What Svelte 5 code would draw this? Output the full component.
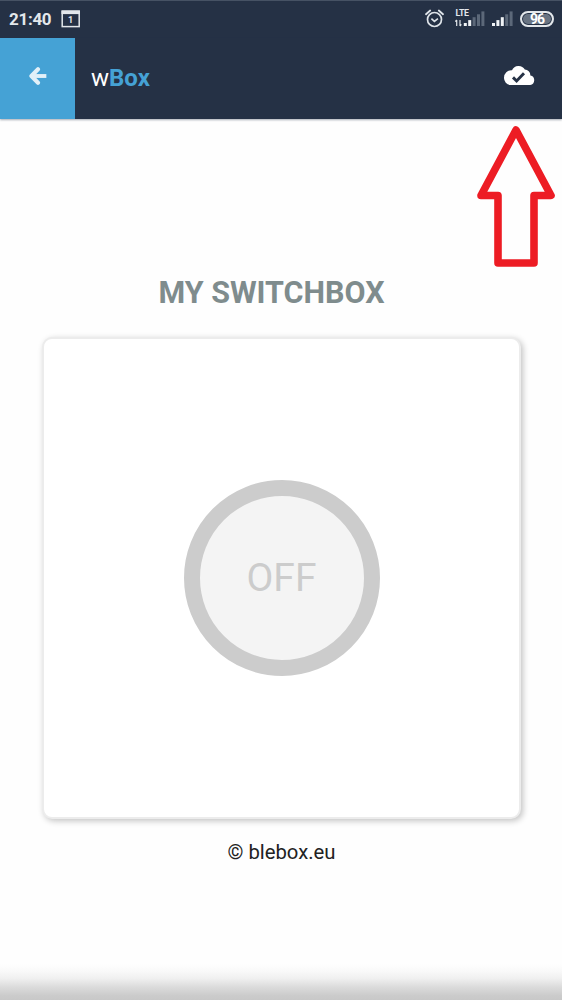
<script lang="ts">
	type Props = {
		name?: string;
		time?: string;
		battery?: number;
	};
	let { name = "My switchBox", time = "21:40", battery = 96 }: Props = $props();

	let on = $state(false);

	const bars = [0, 1, 2, 3, 4];
</script>

{#snippet signal(active: number)}
	{#each bars as i}
		<rect
			x={i * 4.4}
			y={12 - i * 2.9}
			width="3"
			height={3 + i * 2.9}
			fill={i < active ? "#f0f3f6" : "#5c6879"}
		/>
	{/each}
{/snippet}

<div class="screen">
	<div class="status">
		<span class="time">{time}</span>
		<svg class="calendar" width="20" height="18" viewBox="0 0 20 18">
			<rect x="1.2" y="1.2" width="17" height="15.4" fill="none" stroke="#e3e7eb" stroke-width="1.5" />
			<path d="M.5.5h18.4v3.6H.5z" fill="#e3e7eb" />
			<text x="9.7" y="13.3" text-anchor="middle" font-size="9" font-weight="700" fill="#e3e7eb">1</text>
		</svg>

		<div class="indicators">
			<svg class="alarm" width="20" height="20" viewBox="0 0 20 20" fill="none" stroke="#dfe4e9">
				<circle cx="9.5" cy="10.5" r="7" stroke-width="1.7" />
				<path d="M6.4 9.6l3 2.8 3.5-2.8" stroke-width="1.6" />
				<path d="M1 5.2l4.2-3.7M18 5.2l-4.2-3.7" stroke-width="1.8" stroke-linecap="round" />
			</svg>
			<svg class="lte" width="30" height="20" viewBox="0 0 30 20">
				<g transform="translate(8.8 2)">{@render signal(2)}</g>
				<path d="M0 0h15.5v8H0z" fill="#253145" />
				<text x=".5" y="7.4" font-size="8.8" font-weight="700" fill="#e3e7eb" textLength="13.5">LTE</text>
				<path
					d="M1.7 11v6M.3 12.6l1.4-1.6M5 11v6M6.4 15.4L5 17"
					stroke="#e3e7eb"
					stroke-width="1.2"
					fill="none"
				/>
			</svg>
			<svg class="sim" width="21" height="20" viewBox="0 0 21 20">
				<g transform="translate(0 2)">{@render signal(3)}</g>
			</svg>
			<span class="battery">{battery}</span>
		</div>
	</div>

	<header>
		<button class="back" aria-label="Back">
			<svg width="18" height="18" viewBox="0 0 18 18" fill="none" stroke="#e2f0f8">
				<path d="M4 9h11.4" stroke-width="3.9" stroke-linecap="square" />
				<path d="M9 2.2L2.4 9 9 15.8" stroke-width="4.1" stroke-linecap="round" stroke-linejoin="round" />
			</svg>
		</button>
		<h1>w<b>Box</b></h1>
		<svg class="cloud" width="32" height="21" viewBox="0 0 32 21">
			<path
				d="M7.2 20A7 7 0 0 1 1 13 7.6 7.6 0 0 1 9 5.2 7.2 7.2 0 0 1 21.8 4.5 6 6 0 0 1 27.4 10.4 4.9 4.9 0 0 1 27.2 20Z"
				fill="#fff"
			/>
			<path d="M10 12.4l3.6 3.6 7.4-7.7" fill="none" stroke="#253145" stroke-width="2.9" />
		</svg>
	</header>

	<svg class="pointer" width="82" height="146" viewBox="0 0 82 146">
		<path d="M41 8L76 73.5H59V141H23V73.5H6Z" />
	</svg>

	<main>
		<h2>{name}</h2>
		<div class="card">
			<button class="switch" onclick={() => (on = !on)}>{on ? "ON" : "OFF"}</button>
		</div>
		<p>© blebox.eu</p>
	</main>

	<div class="fade"></div>
</div>

<style>
	:global(body) {
		margin: 0;
	}

	.screen {
		position: relative;
		display: flex;
		flex-direction: column;
		height: 1000px;
		background: #fefefe;
		font-family: Roboto, sans-serif;
		overflow: hidden;
	}

	button {
		padding: 0;
		border: 0;
		font-family: inherit;
	}

	.status {
		display: flex;
		align-items: center;
		box-sizing: border-box;
		height: 38px;
		padding: 0 8px 1px 9px;
		border-top: 1px solid #465264;
		background: #253145;
		color: #e3e7eb;
	}

	.time {
		width: 52px;
		font-size: 17px;
		font-weight: 700;
		letter-spacing: -0.3px;
	}

	.indicators {
		display: flex;
		align-items: center;
		margin-left: auto;
	}

	.alarm {
		margin-right: 10px;
	}

	.lte {
		margin-right: 7px;
	}

	.sim {
		margin-right: 7px;
	}

	.battery {
		box-sizing: border-box;
		width: 34px;
		height: 16px;
		border: 2px solid #e3e7eb;
		border-radius: 8px;
		background: #687382;
		box-shadow: inset 0 0 0 1px #253145;
		color: #fff;
		font-size: 14px;
		font-weight: 700;
		letter-spacing: -1px;
		line-height: 12px;
		text-align: center;
	}

	header {
		display: flex;
		align-items: center;
		height: 81px;
		background: #253145;
		box-shadow: 0 1px 2px rgba(37, 49, 69, 0.4);
	}

	.back {
		display: flex;
		align-items: center;
		justify-content: center;
		box-sizing: border-box;
		width: 75px;
		height: 81px;
		padding-bottom: 6px;
		background: #45a2d5;
	}

	h1 {
		margin: 0 auto 2px 16px;
		color: #fff;
		font-size: 24px;
		font-weight: 400;
	}

	h1 b {
		color: #45a2d5;
	}

	.cloud {
		margin: 0 27px 7px 0;
	}

	.pointer {
		position: absolute;
		top: 122px;
		left: 475px;
		fill: none;
		stroke: #ed1c24;
		stroke-width: 7.6;
		stroke-linejoin: round;
	}

	main {
		display: flex;
		flex-direction: column;
		align-items: center;
		padding-top: 156px;
	}

	h2 {
		margin: 0 19px 26px 0;
		color: #7f8c8d;
		font-size: 30.5px;
		font-weight: 700;
		line-height: 36px;
		text-transform: uppercase;
	}

	.card {
		display: flex;
		align-items: center;
		justify-content: center;
		box-sizing: border-box;
		width: 479px;
		height: 482px;
		margin-left: 1px;
		padding-bottom: 1px;
		border: 2px solid #ececec;
		border-radius: 10px;
		background: #fff;
		box-shadow: 2px 2px 6px rgba(0, 0, 0, 0.24);
	}

	.switch {
		box-sizing: border-box;
		width: 196px;
		height: 196px;
		border: 16px solid #ccc;
		border-radius: 50%;
		background: #f4f4f4;
		color: #ccc;
		font-size: 39px;
	}

	p {
		margin: 21px 0 0 1px;
		color: #222;
		font-size: 20.3px;
		line-height: 24px;
	}

	.fade {
		height: 36px;
		margin-top: auto;
		background: linear-gradient(#fefefe, #f9f9f9 20%, #f0f0f0 40%, #dcdcdc 63%, #cbcbcb 88%, #c8c8c8);
	}
</style>
